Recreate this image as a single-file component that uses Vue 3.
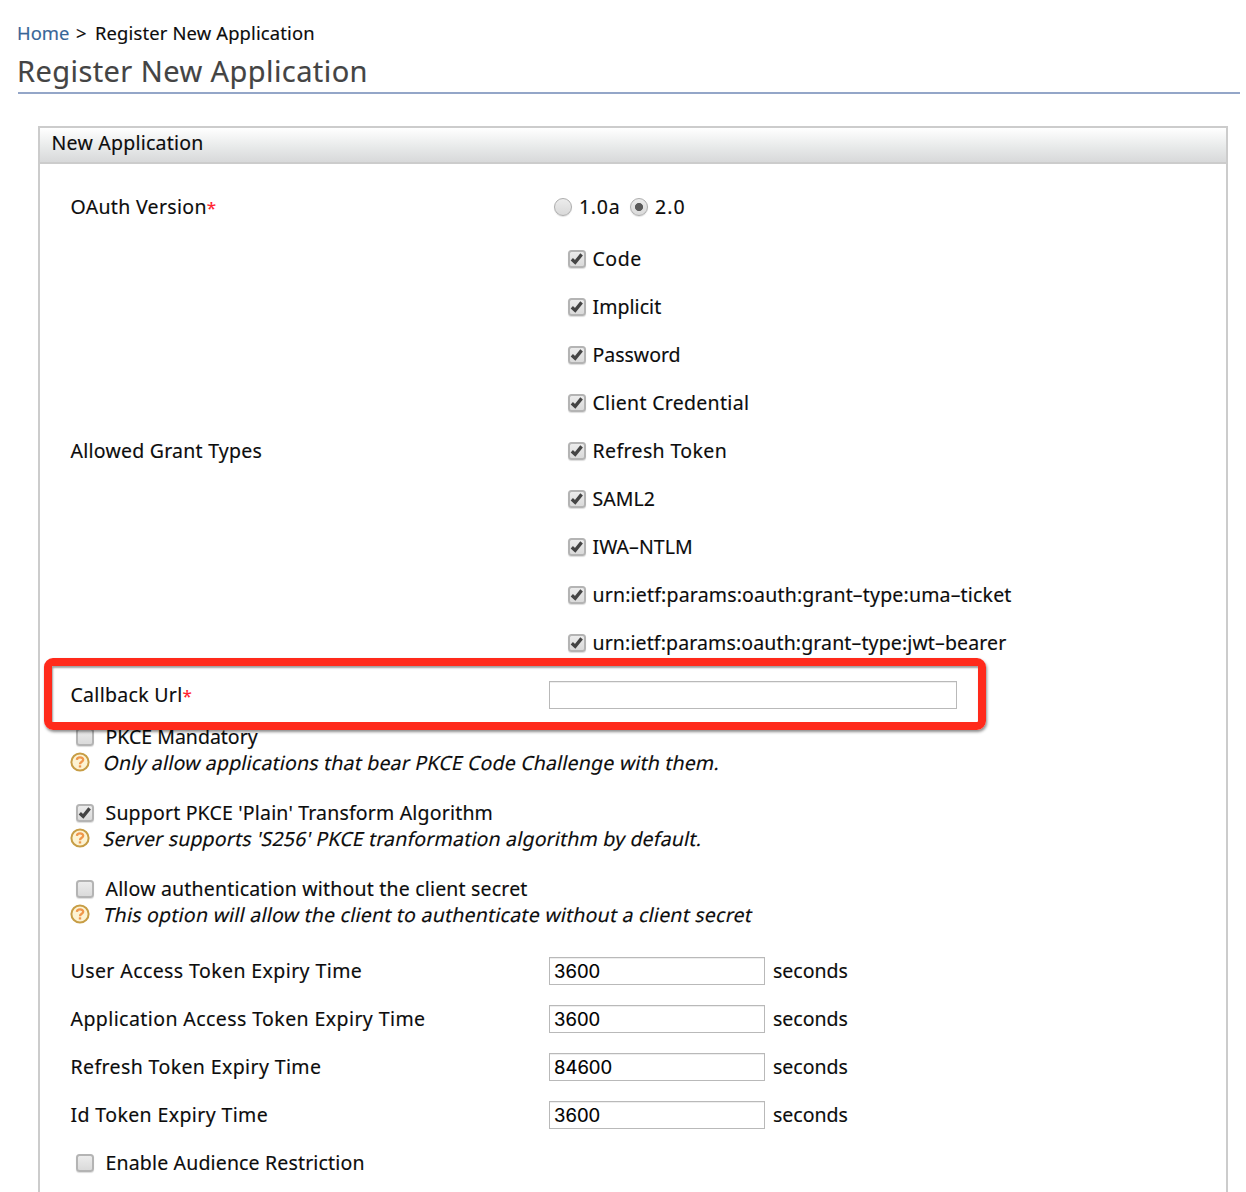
<script setup>
import { h } from 'vue'

const grants = [
  { text: 'Code', ls: 0.55 },
  { text: 'Implicit', ls: 0.05 },
  { text: 'Password', ls: -0.02 },
  { text: 'Client Credential', ls: 0.3 },
  { text: 'Refresh Token', ls: 0.38 },
  { text: 'SAML2', ls: 0.05 },
  { text: 'IWA–NTLM', ls: 0.05 },
  { text: 'urn:ietf:params:oauth:grant–type:uma–ticket', ls: 0.18 },
  { text: 'urn:ietf:params:oauth:grant–type:jwt–bearer', ls: 0.13 },
]

const options = [
  {
    text: 'PKCE Mandatory', ls: 0, on: false,
    help: 'Only allow applications that bear PKCE Code Challenge with them.', helpLs: 0.2,
  },
  {
    text: "Support PKCE 'Plain' Transform Algorithm", ls: 0.18, on: true,
    help: "Server supports 'S256' PKCE tranformation algorithm by default.", helpLs: 0.19,
  },
  {
    text: 'Allow authentication without the client secret', ls: 0.19, on: false,
    help: 'This option will allow the client to authenticate without a client secret', helpLs: 0.24,
  },
]

const expiries = [
  { text: 'User Access Token Expiry Time', ls: 0.41, value: '3600' },
  { text: 'Application Access Token Expiry Time', ls: 0.42, value: '3600' },
  { text: 'Refresh Token Expiry Time', ls: 0.39, value: '84600' },
  { text: 'Id Token Expiry Time', ls: 0.39, value: '3600' },
]

const track = (v) => ({ letterSpacing: v + 'px' })

const CheckMark = () =>
  h('svg', { viewBox: '0 0 18 18', width: 18, height: 18 }, [
    h('path', {
      d: 'M3.8 9.2 L7.2 12.4 L13.6 4.4',
      fill: 'none',
      stroke: '#444',
      'stroke-width': 3.3,
    }),
  ])
</script>

<template>
  <main class="page">
    <nav class="crumbs">
      <a class="home">Home</a><span class="sep">&gt;</span><span class="here">Register New Application</span>
    </nav>
    <h1>Register New Application</h1>

    <section class="panel">
      <header class="panel-head">New Application</header>
      <div class="form">
        <div class="row">
          <div class="label" :style="track(0.32)">OAuth Version<i class="req">*</i></div>
          <div class="radios">
            <span class="radio"></span><span class="r1">1.0a</span>
            <span class="radio on"></span><span class="r2">2.0</span>
          </div>
        </div>

        <div class="row grants">
          <div class="label" :style="track(0.24)">Allowed Grant Types</div>
          <div class="grant-list">
            <div v-for="g in grants" :key="g.text" class="grant">
              <span class="box"><CheckMark /></span>
              <span :style="track(g.ls)">{{ g.text }}</span>
            </div>
          </div>
        </div>

        <div class="row callback">
          <div class="label" :style="track(0.3)">Callback Url<i class="req">*</i></div>
          <div class="field wide"></div>
          <div class="highlight"></div>
        </div>

        <div v-for="o in options" :key="o.text" class="option">
          <div class="line">
            <span class="box"><CheckMark v-if="o.on" /></span>
            <span :style="track(o.ls)">{{ o.text }}</span>
          </div>
          <div class="help">
            <svg class="q" viewBox="0 0 20 20" width="20" height="20">
              <circle cx="10" cy="10" r="8.6" fill="#fdf3d2" stroke="#c79d45" stroke-width="2" />
              <path d="M6.9 7.9 C7 4.6 13.2 4.6 13.2 7.8 C13.2 9.9 10 9.7 10 12.3" fill="none" stroke="#f0974c" stroke-width="2.3" />
              <rect x="8.8" y="13.3" width="2.4" height="2.2" fill="#f0974c" />
            </svg>
            <span class="slant" :style="track(o.helpLs)">{{ o.help }}</span>
          </div>
        </div>

        <div class="expiries">
          <div v-for="e in expiries" :key="e.text" class="row">
            <div class="label" :style="track(e.ls)">{{ e.text }}</div>
            <div class="field">{{ e.value }}</div>
            <span class="unit">seconds</span>
          </div>
        </div>

        <div class="row last">
          <span class="box"></span>
          <span :style="track(0.16)">Enable Audience Restriction</span>
        </div>
      </div>
    </section>
  </main>
</template>

<style>
body {
  margin: 0;
  background: #fff;
}
</style>

<style scoped>
.page {
  box-sizing: border-box;
  height: 1192px;
  overflow: hidden;
  padding: 20px 6px 0 18px;
  background: #fff;
  color: #0c0c0c;
  font: 19.5px/26px "Noto Sans", "DejaVu Sans", sans-serif;
  -webkit-text-stroke: 0.15px currentColor;
  white-space: nowrap;
}
.crumbs {
  display: flex;
  height: 26px;
  font-size: 18.4px;
}
.home {
  width: 59px;
  margin-left: -1px;
  color: #386698;
  letter-spacing: 0;
}
.sep {
  width: 19px;
}
.here {
  letter-spacing: 0.15px;
}
h1 {
  box-sizing: border-box;
  height: 48px;
  margin: 0;
  padding-top: 5px;
  border-bottom: 2px solid #94a6c8;
  color: #444;
  font-size: 29px;
  font-weight: 400;
  line-height: 40px;
  letter-spacing: 0.42px;
  text-indent: -1px;
}
.panel {
  box-sizing: border-box;
  height: 1100px;
  margin: 32px 12px 0 20px;
  border: 2px solid #ccc;
}
.panel-head {
  box-sizing: border-box;
  height: 36px;
  padding: 2px 0 0 11.5px;
  border-bottom: 2px solid #ccc;
  background: linear-gradient(#fff, #e8eaea 55%, #d8d9da);
  letter-spacing: 0.24px;
}
.form {
  padding: 19px 0 0 31px;
}
.row {
  display: flex;
  align-items: center;
  height: 48px;
}
.label {
  width: 478px;
  flex: none;
  text-indent: -0.5px;
}
.req {
  color: #ff202c;
  font-size: 17px;
  font-style: normal;
  letter-spacing: 0;
  line-height: 1;
}
.radios {
  display: flex;
  align-items: center;
  padding-left: 5px;
}
.radio {
  box-sizing: border-box;
  width: 18px;
  height: 18px;
  border: 1.5px solid #adadad;
  border-radius: 50%;
  background: linear-gradient(#ececec, #d9d9d9);
  box-shadow: 0 1px 1px rgba(0, 0, 0, 0.12);
}
.radio.on {
  background: radial-gradient(circle, #5a5a5a 0 3.7px, transparent 4.4px), linear-gradient(#ececec, #dadada);
}
.r1 {
  width: 51px;
  margin-left: 7px;
  letter-spacing: 0.7px;
}
.r2 {
  margin-left: 7px;
  letter-spacing: 1px;
}
.grants {
  height: 432px;
  margin-top: 4px;
}
.grant {
  display: flex;
  align-items: center;
  height: 48px;
  padding-left: 19px;
}
.box {
  box-sizing: border-box;
  position: relative;
  flex: none;
  width: 18px;
  height: 18px;
  margin-right: 6.5px;
  border: 2px solid #b4b4b4;
  border-radius: 3.5px;
  background: linear-gradient(#ececec, #dadada);
  box-shadow: 0 1px 1px rgba(0, 0, 0, 0.14);
}
.box svg {
  position: absolute;
  top: -2px;
  left: -2px;
}
.callback {
  position: relative;
  margin-top: 4px;
}
.highlight {
  position: absolute;
  z-index: 2;
  box-sizing: border-box;
  top: -13px;
  left: -27px;
  width: 942px;
  height: 72px;
  border: 8px solid #ff2a1b;
  border-radius: 9px;
  box-shadow: 1px 2px 3px rgba(0, 0, 0, 0.45), inset 1px 2px 2px rgba(0, 0, 0, 0.38);
}
.field {
  box-sizing: border-box;
  width: 216px;
  height: 28px;
  padding-left: 4px;
  border: 1px solid #b9b9b9;
  box-shadow: inset 0 1px 0 #eee;
  background: #fff;
  color: #000;
  font: 18.5px/27px Inter, "Liberation Sans", sans-serif;
}
.field.wide {
  width: 408px;
}
.option {
  height: 76px;
}
.callback + .option {
  margin-top: 5px;
}
.line {
  display: flex;
  align-items: center;
  height: 26px;
  padding-left: 5px;
}
.line .box,
.last .box {
  margin-right: 11.5px;
}
.help {
  display: flex;
  align-items: center;
  height: 26px;
}
.q {
  flex: none;
  margin: -3px 14.5px 0 -1.5px;
}
.slant {
  display: inline-block;
  transform: skewX(-12deg);
}
.expiries {
  margin-top: -5px;
}
.unit {
  margin-left: 8px;
}
.last {
  padding-left: 5px;
}
</style>
